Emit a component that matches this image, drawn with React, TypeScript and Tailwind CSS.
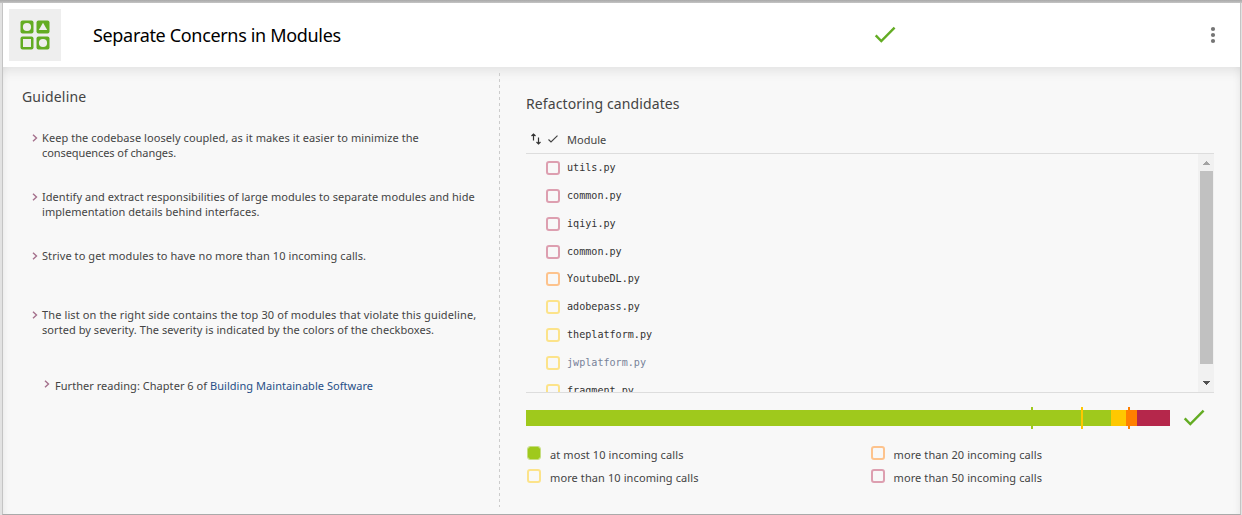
import React from "react";

const CheckMark = ({ className }: { className: string }) => (
  <svg viewBox="0 0 22 18" className={className} fill="none" stroke="currentColor">
    <path d="M1.7 9.3 L7.3 15 L20.6 1.6" strokeWidth="2.4" />
  </svg>
);

const Chevron = ({ className }: { className: string }) => (
  <svg viewBox="0 0 6 8" className={`h-2 w-1.5 shrink-0 ${className}`} fill="none" stroke="#a4708c" strokeWidth="1.4">
    <path d="M1 0.7 L4.5 4 L1 7.3" />
  </svg>
);

const ModulesIcon = () => (
  <svg viewBox="0 0 30 30" className="size-[30px]" fill="#63ac23">
    <rect x="0.5" y="0.5" width="13" height="13" rx="2" />
    <rect x="16.5" y="0.5" width="13" height="13" rx="2" />
    <rect x="0.5" y="16.5" width="13" height="13" rx="2" />
    <rect x="16.5" y="16.5" width="13" height="13" rx="2" />
    <g fill="#eee">
      <circle cx="7" cy="7" r="4.1" />
      <path d="M23 2.8 L27.2 10 H18.8 Z" />
      <rect x="3" y="19" width="8" height="8" />
      <circle cx="23" cy="23" r="4.1" />
    </g>
  </svg>
);

const guidelines = [
  [
    { text: "Keep the codebase loosely coupled, as it makes it easier to minimize the", spacing: "tracking-[0.07px]" },
    { text: "consequences of changes.", spacing: "tracking-[-0.08px]" },
  ],
  [
    { text: "Identify and extract responsibilities of large modules to separate modules and hide", spacing: "tracking-[0.05px]" },
    { text: "implementation details behind interfaces.", spacing: "tracking-[0.05px]" },
  ],
  [{ text: "Strive to get modules to have no more than 10 incoming calls.", spacing: "tracking-[0.08px]" }],
  [
    { text: "The list on the right side contains the top 30 of modules that violate this guideline,", spacing: "tracking-[0.115px]" },
    { text: "sorted by severity. The severity is indicated by the colors of the checkboxes.", spacing: "tracking-[0.055px]" },
  ],
];

const red = "border-2 border-[#dd9fb0]";
const orange = "border-2 border-[#fdc38d]";
const yellow = "border-2 border-[#fce38a]";
const green = "border border-[#c6de80] bg-[#9fc91c] bg-clip-padding";

const modules = [
  { name: "utils.py", color: red },
  { name: "common.py", color: red },
  { name: "iqiyi.py", color: red },
  { name: "common.py", color: red },
  { name: "YoutubeDL.py", color: orange },
  { name: "adobepass.py", color: yellow },
  { name: "theplatform.py", color: yellow },
  { name: "jwplatform.py", color: yellow, visited: true },
  { name: "fragment.py", color: yellow },
];

const Box = ({ color }: { color: string }) => (
  <span className={`block size-3.5 shrink-0 rounded-[3px] ${color}`} />
);

const Legend = ({ color, label }: { color: string; label: string }) => (
  <div className="flex h-[23px] items-start">
    <Box color={color} />
    <span className="mt-px ml-[9px] text-[11px] leading-4 tracking-[0.1px] whitespace-nowrap">{label}</span>
  </div>
);

export default function App() {
  return (
    <div className="h-[515px] w-[1242px] overflow-hidden bg-[#e2e2e2] font-['Noto_Sans',sans-serif] text-[#444]">
      <div className="h-[3px] bg-linear-to-b from-[#a9a9a9] to-[#c4c4c4]" />
      <div className="ml-0.5 flex h-[512px] w-[1239px] flex-col border-x border-b border-[#c4c4c4] border-b-[#aaa] bg-[#f8f8f8]">
        <header className="flex h-16 shrink-0 items-center bg-white">
          <div className="ml-1.5 flex size-[52px] items-center justify-center bg-[#eee]">
            <ModulesIcon />
          </div>
          <h1 className="ml-8 w-[781px] text-[18px] text-black">
            <span className="tracking-[-0.33px]">Separate Concerns in Modules</span>
          </h1>
          <CheckMark className="-mt-px h-[18px] w-[22px] text-[#63ac23]" />
          <svg viewBox="0 0 6 18" className="ml-[314px] h-[18px] w-1.5" fill="#757575">
            <circle cx="3" cy="3" r="2.1" />
            <circle cx="3" cy="9" r="2.1" />
            <circle cx="3" cy="15" r="2.1" />
          </svg>
        </header>
        <div className="flex flex-1 shadow-[inset_0_10px_12px_-6px_rgba(0,0,0,0.09),inset_-7px_0_8px_-6px_rgba(0,0,0,0.05),inset_7px_0_8px_-6px_rgba(0,0,0,0.05)]">
          <section className="w-[496px] pl-5">
            <h2 className="-ml-px pt-5 text-[14px] leading-5">
              <span className="tracking-[0.18px]">Guideline</span>
            </h2>
            <ul className="pt-[23px] pl-[9px] text-[11px] leading-[15px]">
              {guidelines.map((lines, i) => (
                <li key={i} className="flex h-[59px] gap-1">
                  <Chevron className="mt-1" />
                  <div>
                    {lines.map((l) => (
                      <div key={l.text} className={`whitespace-nowrap ${l.spacing}`}>{l.text}</div>
                    ))}
                  </div>
                </li>
              ))}
              <li className="mt-3 ml-3 flex gap-[5px] leading-[15px]">
                <Chevron className="mt-0.5" />
                <div className="tracking-[0.04px] whitespace-nowrap">
                  Further reading: Chapter 6 of <a className="text-[#274f87]">Building Maintainable Software</a>
                </div>
              </li>
            </ul>
          </section>
          <svg className="mt-1.5 h-[434px] w-px" viewBox="0 0 1 434">
            <path d="M0.5 0 V434" stroke="#ccc" strokeDasharray="3 3" />
          </svg>
          <section className="ml-[26px] w-[688px]">
            <h2 className="pt-[27px] text-[14px] leading-5">
              <span className="tracking-[0.1px]">Refactoring candidates</span>
            </h2>
            <div className="flex h-10 items-end border-b border-[#ddd] pb-1.5 pl-[5px]">
              <svg viewBox="0 0 10 12" className="mb-[2px] h-3 w-2.5" fill="none" stroke="#333" strokeWidth="1.2">
                <path d="M2.5 7.5 V1 M0.5 3 L2.5 1 L4.5 3 M7.5 4.5 V11 M5.5 9 L7.5 11 L9.5 9" />
              </svg>
              <svg viewBox="0 0 10 8" className="mb-1 ml-[7px] h-2 w-2.5" fill="none" stroke="#444" strokeWidth="1.2">
                <path d="M0.5 4.5 L3 7 L9.5 0.6" />
              </svg>
              <span className="ml-[9px] text-[11px] leading-[15px]">Module</span>
            </div>
            <div className="flex h-[239px] overflow-hidden border-b border-[#ddd]">
              <ul className="flex-1 pt-[7px] pl-5">
                {modules.map((m, i) => (
                  <li key={i} className="flex h-[27.85px] items-start">
                    <Box color={m.color} />
                    <span className={`-mt-px ml-[7px] font-['DejaVu_Sans_Mono',monospace] text-[10.1px] leading-[15px] ${m.visited ? "text-[#778298]" : "text-[#333]"}`}>
                      {m.name}
                    </span>
                  </li>
                ))}
              </ul>
              <div className="flex w-4 flex-col items-center bg-[#f1f1f1]">
                <svg viewBox="0 0 16 17" className="h-[17px] w-4" fill="#a3a3a3" shapeRendering="crispEdges">
                  <path d="M8.5 7 L12 11 H5 Z" />
                </svg>
                <div className="h-[193px] w-[13px] bg-[#c1c1c1]" />
                <svg viewBox="0 0 16 17" className="mt-2.5 h-[17px] w-4" fill="#505050" shapeRendering="crispEdges">
                  <path d="M5 7 H12 L8.5 11 Z" />
                </svg>
              </div>
            </div>
            <div className="mt-[13px] flex h-[23px] items-center">
              <svg viewBox="0 0 644 22" className="h-[22px] w-[644px] shrink-0" shapeRendering="crispEdges">
                <path d="M0 3H585V19H0Z M505 0H507V22H505Z" fill="#9fc91c" />
                <path d="M585 3H600V19H585Z M555 0H557V22H555Z" fill="#ffc800" />
                <path d="M600 3H611V19H600Z M602 0H604V22H602Z" fill="#ff8000" />
                <path d="M611 3H644V19H611Z" fill="#b5274b" />
              </svg>
              <CheckMark className="ml-[13px] h-[18px] w-[22px] text-[#63ac23]" />
            </div>
            <div className="mt-[17px] grid grid-cols-2 pl-px">
              <Legend color={green} label="at most 10 incoming calls" />
              <Legend color={orange} label="more than 20 incoming calls" />
              <Legend color={yellow} label="more than 10 incoming calls" />
              <Legend color={red} label="more than 50 incoming calls" />
            </div>
          </section>
        </div>
      </div>
    </div>
  );
}
